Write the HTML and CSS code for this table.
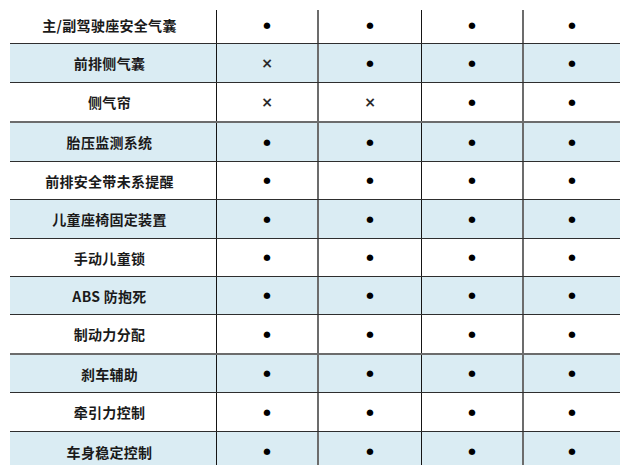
FILE: index.html
```html
<!DOCTYPE html>
<html lang="zh">
<head>
<meta charset="utf-8">
<link rel="stylesheet" href="styles.css">
</head>
<body>
<div class="table">
  <div class="row first"><div class="c name">主/副驾驶座安全气囊</div><div class="c b2"><span class="dot">●</span></div><div class="c b1"><span class="dot">●</span></div><div class="c b2"><span class="dot">●</span></div><div class="c"><span class="dot">●</span></div></div>
  <div class="row alt"><div class="c name">前排侧气囊</div><div class="c b2"><span class="x">×</span></div><div class="c b1"><span class="dot">●</span></div><div class="c b2"><span class="dot">●</span></div><div class="c"><span class="dot">●</span></div></div>
  <div class="row thick"><div class="c name">侧气帘</div><div class="c b2"><span class="x">×</span></div><div class="c b1"><span class="x">×</span></div><div class="c b2"><span class="dot">●</span></div><div class="c"><span class="dot">●</span></div></div>
  <div class="row alt"><div class="c name">胎压监测系统</div><div class="c b2"><span class="dot">●</span></div><div class="c b1"><span class="dot">●</span></div><div class="c b2"><span class="dot">●</span></div><div class="c"><span class="dot">●</span></div></div>
  <div class="row short"><div class="c name">前排安全带未系提醒</div><div class="c b2"><span class="dot">●</span></div><div class="c b1"><span class="dot">●</span></div><div class="c b2"><span class="dot">●</span></div><div class="c"><span class="dot">●</span></div></div>
  <div class="row alt"><div class="c name">儿童座椅固定装置</div><div class="c b2"><span class="dot">●</span></div><div class="c b1"><span class="dot">●</span></div><div class="c b2"><span class="dot">●</span></div><div class="c"><span class="dot">●</span></div></div>
  <div class="row short"><div class="c name">手动儿童锁</div><div class="c b2"><span class="dot">●</span></div><div class="c b1"><span class="dot">●</span></div><div class="c b2"><span class="dot">●</span></div><div class="c"><span class="dot">●</span></div></div>
  <div class="row alt short"><div class="c name">ABS 防抱死</div><div class="c b2"><span class="dot">●</span></div><div class="c b1"><span class="dot">●</span></div><div class="c b2"><span class="dot">●</span></div><div class="c"><span class="dot">●</span></div></div>
  <div class="row thick"><div class="c name">制动力分配</div><div class="c b2"><span class="dot">●</span></div><div class="c b1"><span class="dot">●</span></div><div class="c b2"><span class="dot">●</span></div><div class="c"><span class="dot">●</span></div></div>
  <div class="row alt short"><div class="c name">刹车辅助</div><div class="c b2"><span class="dot">●</span></div><div class="c b1"><span class="dot">●</span></div><div class="c b2"><span class="dot">●</span></div><div class="c"><span class="dot">●</span></div></div>
  <div class="row"><div class="c name">牵引力控制</div><div class="c b2"><span class="dot">●</span></div><div class="c b1"><span class="dot">●</span></div><div class="c b2"><span class="dot">●</span></div><div class="c"><span class="dot">●</span></div></div>
  <div class="row alt last"><div class="c name">车身稳定控制</div><div class="c b2"><span class="dot">●</span></div><div class="c b1"><span class="dot">●</span></div><div class="c b2"><span class="dot">●</span></div><div class="c"><span class="dot">●</span></div></div>
</div>
</body>
</html>
```
FILE: styles.css
```css
html, body {
  margin: 0;
  padding: 0;
  background: #ffffff;
}

.table {
  margin: 10px 0 0 10px;
  width: 610px;
  display: flex;
  flex-direction: column;
  font-family: "Noto Sans CJK SC", "Noto Sans", sans-serif;
  color: #1a1a1a;
}

.row {
  display: grid;
  grid-template-columns: 207px 102px 103px 102px 96px;
  height: 39px;
  box-sizing: border-box;
  border-bottom: 1px solid #2e2e2e;
  background: #ffffff;
}

.row.alt {
  background: #daecf3;
}

.row.short {
  height: 38px;
}

.row.thick {
  height: 40px;
  border-bottom: 2px solid #6c6c6c;
}

.row.first {
  height: 34px;
  padding-bottom: 3px;
}

.row.first .c {
  margin-bottom: -3px;
  padding-bottom: 3px;
}

.row.last {
  height: 33px;
  border-bottom: none;
}

.row.last .c {
  padding-top: 6px;
}

.c {
  display: flex;
  align-items: center;
  justify-content: center;
  box-sizing: border-box;
  min-width: 0;
}

.c.b1 {
  border-right: 1px solid #151515;
}

.c.b2 {
  border-right: 2px solid #6c6c6c;
}

.c.name {
  border-right: 1px solid #151515;
  padding-right: 7px;
  font-size: 14px;
  font-weight: 700;
  letter-spacing: 0.3px;
  white-space: nowrap;
}

.dot {
  font-family: "DejaVu Sans", sans-serif;
  font-size: 8.5px;
  line-height: 1;
  color: #000000;
}

.x {
  font-family: "DejaVu Sans", sans-serif;
  font-size: 14px;
  font-weight: 700;
  line-height: 1;
  color: #2a2a2a;
}
```
